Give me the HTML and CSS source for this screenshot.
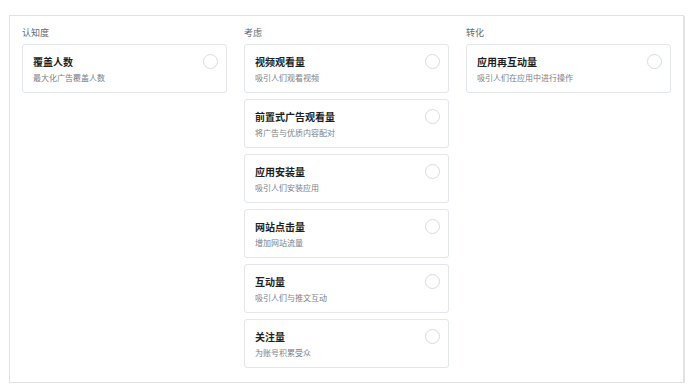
FILE: index.html
```html
<!DOCTYPE html>
<html lang="zh">
<head>
<meta charset="utf-8">
<link rel="stylesheet" href="styles.css">
</head>
<body>
<div class="panel">
  <div class="col">
    <div class="label">认知度</div>
    <div class="card"><div class="text"><div class="title">覆盖人数</div><div class="sub">最大化广告覆盖人数</div></div><span class="radio"></span></div>
  </div>
  <div class="col">
    <div class="label">考虑</div>
    <div class="card"><div class="text"><div class="title">视频观看量</div><div class="sub">吸引人们观看视频</div></div><span class="radio"></span></div>
    <div class="card"><div class="text"><div class="title">前置式广告观看量</div><div class="sub">将广告与优质内容配对</div></div><span class="radio"></span></div>
    <div class="card"><div class="text"><div class="title">应用安装量</div><div class="sub">吸引人们安装应用</div></div><span class="radio"></span></div>
    <div class="card"><div class="text"><div class="title">网站点击量</div><div class="sub">增加网站流量</div></div><span class="radio"></span></div>
    <div class="card"><div class="text"><div class="title">互动量</div><div class="sub">吸引人们与推文互动</div></div><span class="radio"></span></div>
    <div class="card"><div class="text"><div class="title">关注量</div><div class="sub">为账号积累受众</div></div><span class="radio"></span></div>
  </div>
  <div class="col">
    <div class="label">转化</div>
    <div class="card"><div class="text"><div class="title">应用再互动量</div><div class="sub">吸引人们在应用中进行操作</div></div><span class="radio"></span></div>
  </div>
</div>
</body>
</html>
```
FILE: styles.css
```css
html, body {
  margin: 0;
  padding: 0;
  background: #ffffff;
}
body {
  font-family: "Noto Sans CJK SC", "Noto Sans", sans-serif;
  padding: 15px 0 0 9px;
}
.panel {
  width: 673px;
  box-sizing: border-box;
  width: 675px;
  border: 1px solid #e2e2e2;
  box-shadow: 1px 1px 0 #e2e2e2;
  padding: 11px 12px 14px 12px;
  display: grid;
  grid-template-columns: 205px 205px 205px;
  column-gap: 17px;
  align-items: start;
}
.col {
  display: flex;
  flex-direction: column;
  gap: 6px;
}
.label {
  font-size: 9px;
  line-height: 12px;
  color: #666a70;
  margin-bottom: -1px;
}
.card {
  box-sizing: border-box;
  height: 49px;
  border: 1px solid #e3e6ea;
  border-radius: 3px;
  padding: 10px 8px 8px 10px;
  display: flex;
  justify-content: space-between;
  align-items: flex-start;
}
.title {
  font-size: 10px;
  line-height: 14px;
  font-weight: bold;
  color: #1c1f23;
}
.sub {
  font-size: 8px;
  line-height: 12px;
  margin-top: 3px;
  color: #7b8087;
}
.radio {
  box-sizing: border-box;
  width: 15px;
  height: 15px;
  border: 1px solid #d6dbe1;
  border-radius: 50%;
  margin-top: -1px;
  flex: none;
}
```
